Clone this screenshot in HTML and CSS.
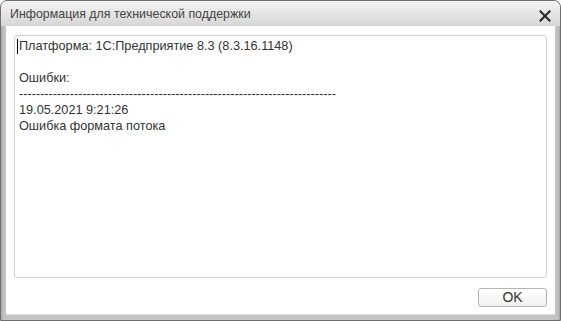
FILE: index.html
```html
<!DOCTYPE html>
<html lang="ru">
<head>
    <meta charset="UTF-8">
    <title>Информация для технической поддержки</title>
    <link rel="stylesheet" href="styles.css">
</head>
<body>

    <div class="window">
        <div class="titlebar">
            <span class="title">Информация для технической поддержки</span>
            <span class="close">
                <svg width="12" height="12" viewBox="0 0 12 12">
                    <path d="M1.5 1.5 L10.5 10.5 M10.5 1.5 L1.5 10.5" stroke="#2b2b2b" stroke-width="2.2" stroke-linecap="square"/>
                </svg>
            </span>
        </div>
        <div class="content">
            <div class="textbox"><span class="caret"></span>Платформа: 1С:Предприятие 8.3 (8.3.16.1148)

Ошибки:
---------------------------------------------------------------------------
19.05.2021 9:21:26
Ошибка формата потока</div>
            <div class="buttons">
                <button type="button" class="ok-btn">OK</button>
            </div>
        </div>
    </div>

</body>
</html>
```
FILE: styles.css
```css
* {
    box-sizing: border-box;
}

body {
    margin: 0;
    background: #fff;
    font-family: Arial, "Liberation Sans", sans-serif;
}

.window {
    width: 561px;
    height: 321px;
    border: 1px solid #6f6f6f;
    border-radius: 7px 7px 0 0;
    background: linear-gradient(to right, #a9a9a9, #c4c4c4 3px, #c4c4c4 calc(100% - 3px), #a9a9a9);
    display: flex;
    flex-direction: column;
    overflow: hidden;
}

.titlebar {
    height: 25px;
    flex: none;
    display: flex;
    align-items: center;
    justify-content: space-between;
    padding: 0 9px 0 9px;
    background: linear-gradient(to bottom, #f4f4f4, #e2e2e2 60%, #d6d6d6);
}

.title {
    font-size: 12.4px;
    color: #444;
    padding-top: 1px;
}

.close {
    display: flex;
    margin-top: 4px;
}

.content {
    flex: 1;
    margin: 0 5px 6px 5px;
    background: #fff;
    padding: 9px 8px 7px 8px;
    display: flex;
    flex-direction: column;
    box-shadow: 0 1px 0 #dcdcdc;
}

.textbox {
    flex: 1;
    border: 1px solid #d3d3d3;
    border-radius: 3px;
    padding: 2px 4px;
    font-size: 12.7px;
    line-height: 16px;
    color: #333;
    white-space: pre;
    overflow: hidden;
    position: relative;
}

.caret {
    position: absolute;
    left: 2px;
    top: 3px;
    width: 1px;
    height: 15px;
    background: #000;
}

.buttons {
    display: flex;
    justify-content: flex-end;
    padding-top: 10px;
}

.ok-btn {
    width: 69px;
    height: 19px;
    border: 1px solid #b4b4b4;
    border-radius: 3px;
    background: linear-gradient(to bottom, #ffffff, #f0f0f0);
    font-family: Arial, "Liberation Sans", sans-serif;
    font-size: 14px;
    color: #333;
    padding: 0;
    line-height: 17px;
}
```
